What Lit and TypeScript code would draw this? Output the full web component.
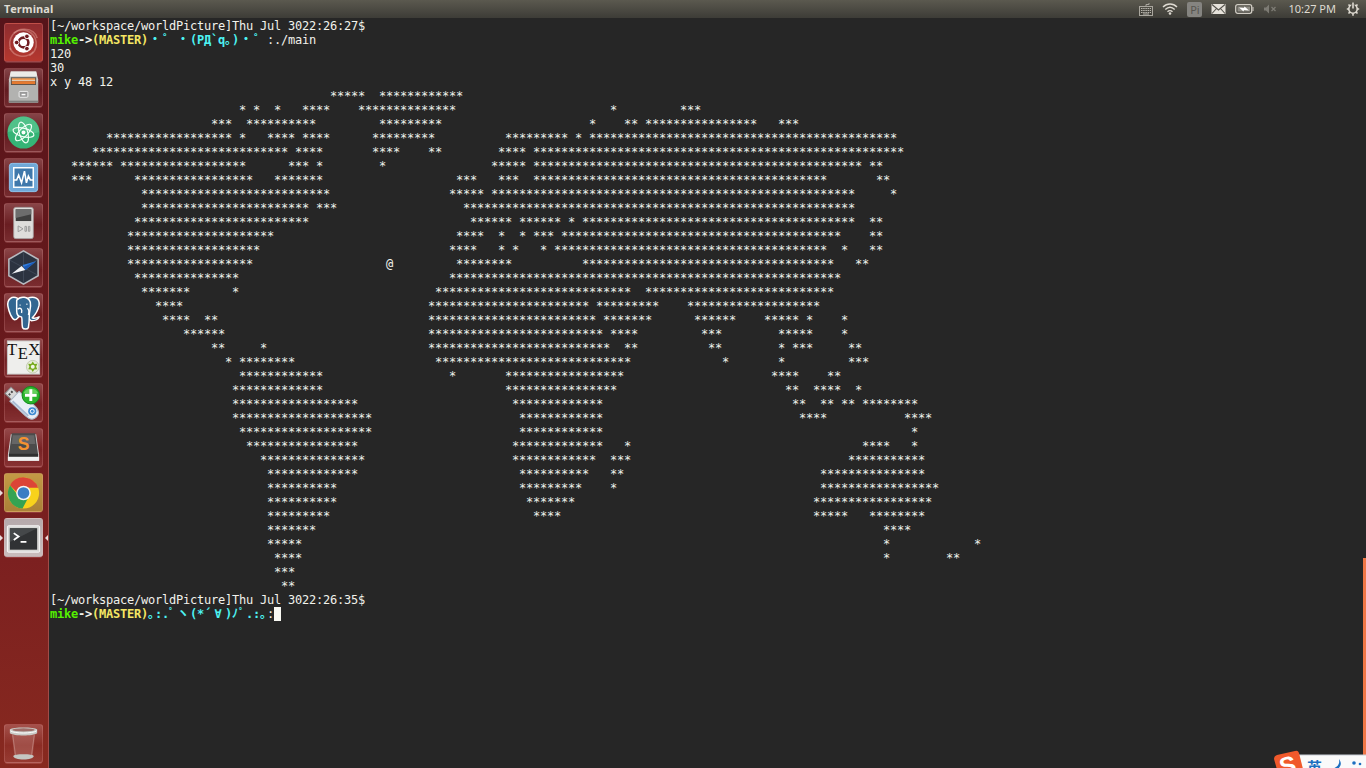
import { LitElement, html, svg, css, type TemplateResult } from "lit";
import { customElement, property } from "lit/decorators.js";

type Run = [col: number, len: number, ch?: string];

/* World map rows: runs of asterisks as [column, length]. */
const MAP: Run[][] = [
  [[40, 5], [47, 12]],
  [[27, 1], [29, 1], [32, 1], [36, 4], [44, 14], [80, 1], [90, 3]],
  [[23, 3], [28, 10], [47, 9], [77, 1], [82, 2], [85, 16], [104, 3]],
  [[8, 18], [27, 1], [31, 4], [36, 4], [46, 9], [65, 9], [75, 1], [77, 44]],
  [[6, 28], [35, 4], [46, 4], [54, 2], [64, 4], [69, 53]],
  [[3, 6], [10, 18], [34, 3], [38, 1], [47, 1], [63, 5], [69, 47], [117, 2]],
  [[3, 3], [12, 17], [32, 7], [58, 3], [64, 3], [69, 42], [118, 2]],
  [[13, 27], [57, 5], [63, 52], [120, 1]],
  [[13, 24], [38, 3], [59, 56]],
  [[12, 25], [60, 6], [67, 6], [74, 1], [76, 39], [117, 2]],
  [[11, 21], [58, 4], [64, 1], [67, 1], [69, 3], [73, 40], [117, 2]],
  [[11, 19], [57, 4], [64, 1], [66, 1], [70, 1], [72, 39], [113, 1], [117, 2]],
  [[11, 18], [48, 1, "@"], [58, 8], [76, 36], [115, 2]],
  [[12, 15], [57, 56]],
  [[13, 7], [26, 1], [55, 28], [85, 27]],
  [[15, 4], [54, 23], [78, 9], [91, 19]],
  [[16, 4], [22, 2], [54, 24], [79, 7], [92, 6], [102, 5], [108, 1], [113, 1]],
  [[19, 6], [54, 25], [80, 4], [93, 3], [104, 5], [113, 1]],
  [[23, 2], [30, 1], [54, 26], [82, 2], [94, 2], [104, 1], [106, 3], [114, 2]],
  [[25, 1], [27, 8], [55, 28], [96, 1], [104, 1], [114, 3]],
  [[27, 12], [57, 1], [65, 17], [103, 4], [111, 2]],
  [[26, 13], [65, 16], [105, 2], [109, 4], [115, 1]],
  [[26, 18], [66, 13], [106, 2], [110, 2], [113, 2], [116, 8]],
  [[26, 20], [67, 12], [107, 4], [122, 4]],
  [[27, 19], [67, 12], [123, 1]],
  [[28, 16], [66, 13], [82, 1], [116, 4], [123, 1]],
  [[30, 15], [66, 12], [80, 3], [114, 11]],
  [[31, 13], [67, 10], [80, 2], [110, 15]],
  [[31, 10], [67, 9], [80, 1], [110, 17]],
  [[31, 10], [68, 7], [109, 17]],
  [[31, 9], [69, 4], [109, 5], [117, 8]],
  [[31, 7], [119, 4]],
  [[31, 5], [119, 1], [132, 1]],
  [[32, 4], [119, 1], [128, 2]],
  [[32, 3]],
  [[33, 2]],
];

const toLine = (runs: Run[]) =>
  runs.reduce((line, [col, len, ch = "*"]) => line.padEnd(col) + ch.repeat(len), "");

const WIDE = new Set(["・", "゜", "ヽ", "∀"]);

@customElement("term-screen")
export class TermScreen extends LitElement {
  static styles = css`
    :host {
      display: block;
      background: #262626;
      color: #f2f2ec;
      font: 12px/14px "DejaVu Sans Mono", "Noto Sans CJK JP", monospace;
      padding: 1px 0 0 1px;
      overflow: hidden;
    }
    .line { display: flex; height: 14px; white-space: pre; }
    .run { display: flex; }
    .cell { flex: none; width: 7px; }
    .wide { width: 14px; text-align: center; }
    .bold { font-weight: bold; }
    .user { color: #55f000; }
    .branch { color: #f5e663; }
    .face { color: #4df3f3; }
    .cursor { width: 7px; height: 14px; background: #f8f8f2; }
  `;

  private cells(text: string, cls = "") {
    return html`<span class="run ${cls}">${[...text].map(
      (c) => html`<span class="cell ${WIDE.has(c) ? "wide" : ""}">${c}</span>`
    )}</span>`;
  }

  private line(content: unknown) {
    return html`<div class="line">${content}</div>`;
  }

  private prompt(face: string, rest: string) {
    return html`${this.cells("mike", "bold user")}${this.cells("->", "bold")}${this.cells(
      "(MASTER)",
      "bold branch"
    )}${this.cells(face, "bold face")}${this.cells(rest)}`;
  }

  render() {
    return html`
      ${this.line(this.cells("[~/workspace/worldPicture]Thu Jul 3022:26:27$"))}
      ${this.line(this.prompt("・゜・(РД`q｡)・゜", ":./main"))}
      ${["120", "30", "x y 48 12"].map((t) => this.line(this.cells(t)))}
      ${MAP.map((r) => this.line(this.cells(toLine(r))))}
      ${this.line(this.cells("[~/workspace/worldPicture]Thu Jul 3022:26:35$"))}
      ${this.line(html`${this.prompt("｡:.ﾟヽ(*´∀)ﾉﾟ.:｡", ":")}<span class="cursor"></span>`)}
    `;
  }
}

interface App {
  name: string;
  tone?: string;
  running?: boolean;
  active?: boolean;
  art: TemplateResult;
}

const APPS: App[] = [
  {
    name: "Dash home",
    tone: "dash",
    art: svg`
      <g fill="none" stroke="#e8a8a0" stroke-opacity=".45" stroke-width="1.6">
        <path d="M7 27C3 15 11 5 22 6c6 0 11 4 12 9"/><path d="M10 10c9-7 21-2 23 9 1 7-3 12-7 14"/>
        <path d="M30 29c-8 8-20 5-24-4"/>
      </g>
      <circle cx="20" cy="19.500" r="10.500" fill="#fff"/>
      <circle cx="20" cy="19.500" r="5" fill="none" stroke="#701c20" stroke-width="2.6"/>
      <g fill="#701c20" stroke="#fff" stroke-width="1"><circle cx="13" cy="19.500" r="2.400"/><circle cx="23.500" cy="13.200" r="2.400"/><circle cx="23.500" cy="25.800" r="2.400"/></g>`,
  },
  {
    name: "Files",
    art: svg`
      <path d="M7 3h26l2 8v24H5V11z" fill="#c9c9c7"/><path d="M7 3h26l1 5H6z" fill="#ecece9"/>
      <path d="M7 9h26v8H7z" fill="#55504c"/><path d="M8 10h24v2H8z" fill="#f5a15c"/><path d="M8 12h24v1H8z" fill="#fbe4cc"/><path d="M8 13h24v3H8z" fill="#e57a30"/>
      <path d="M5 14h2v3h26v-3h2v21H5z" fill="#b2b2b0"/><path d="M5 33h30v2H5z" fill="#80807e"/>
      <rect x="15.500" y="23.500" width="9" height="6" rx="1" fill="#999" stroke="#f0f0f0"/><path d="M18 26h4v1.500h-4z" fill="#fff"/>`,
  },
  {
    name: "Atom",
    art: svg`
      <circle cx="20" cy="19.500" r="16.500" fill="#35b476"/><path d="M4 19a16 16 0 0 1 32 0c-9 4-22-3-32 0z" fill="#66cc99" opacity=".55"/>
      <g fill="none" stroke="#f1fff7" stroke-width="1.2"><ellipse cx="20" cy="19.500" rx="11" ry="4.300" transform="rotate(14 20 19.500)"/><ellipse cx="20" cy="19.500" rx="11" ry="4.300" transform="rotate(74 20 19.500)"/><ellipse cx="20" cy="19.500" rx="11" ry="4.300" transform="rotate(134 20 19.500)"/></g>
      <circle cx="20" cy="19.500" r="2" fill="#fff"/>`,
  },
  {
    name: "System Monitor",
    art: svg`
      <rect x="5.500" y="5" width="29" height="29" rx="3" fill="#70a8d8" stroke="#8fc4ec"/>
      <rect x="10" y="9.500" width="20" height="20" fill="#3f78ab" stroke="#fff" stroke-width="1.5"/>
      <path d="M10 22h3l2-5 3 8 3-12 2 12 2-7 2 4h3" fill="none" stroke="#fff" stroke-width="1.6"/>`,
  },
  {
    name: "Media Player",
    art: svg`
      <rect x="10" y="4" width="20" height="32" rx="2" fill="#dedddb" stroke="#aaa" stroke-width=".8"/>
      <rect x="12" y="6" width="16" height="12" fill="#3f3f3f"/><path d="M12 6h16v5l-16 4z" fill="#6d6d6d"/>
      <path d="M14.500 23v6l5-3z" fill="none" stroke="#999"/><path d="M21.500 23.500h1.500v5h-1.500zM25 23.500h1.500v5H25z" fill="none" stroke="#999"/>`,
  },
  {
    name: "Compass",
    art: svg`
      <path d="M20 2.500 35 11v17L20 36.500 5 28V11z" fill="#2c3340" stroke="#b7bac0" stroke-width="1.6"/>
      <path d="M20 4v31M6 12l28 15M34 12 6 27" stroke="#434c5b" stroke-width=".8"/>
      <path d="m8 26 10-8 4 4z" fill="#f0f2f5"/><path d="m33 13-14 4 3 5z" fill="#2f7bdb"/>
      <path d="M20 19l2 3 11-9z" fill="#1b59b5"/>`,
  },
  {
    name: "pgAdmin",
    art: svg`
      <g stroke="#fff" stroke-width="1.5" stroke-linejoin="round" fill="#336791">
        <path d="M14 5C8 2 3 6 4 13c1 6 4 13 7 14 2 0 3-2 4-3z"/>
        <path d="M24 5c7-3 13 0 12 7-1 5-4 10-7 13 2 1 5 0 7-1-1 3-4 4-8 4l-4-3z"/>
        <path d="M13 7c4-5 12-4 14 2 1 5-1 9-1 13 0 6-.5 10-1 13-1 2-5 2-6 0-1-4 0-8-1-11-4 0-5-3-5-6z"/>
      </g>
      <path d="M14 16c3-2 5 0 4 4M24 15c2 2 2 4 1 7M16 12h1M23 11h1" fill="none" stroke="#fff" stroke-width="1.4"/>`,
  },
  {
    name: "TeX editor",
    art: svg`
      <rect x="3.500" y="2.500" width="33" height="34" fill="#eeeeec" stroke="#c8c8c6"/>
      <text class="tex" x="3" y="17">T</text><text class="tex" x="14" y="21">E</text><text class="tex" x="25" y="17">X</text>
      <circle cx="29.500" cy="29" r="6.500" fill="#e6ecd9" stroke="#b8c2a2" stroke-width=".8"/>
      <path d="m29.500 23.500 1.700 2.600 3-.1-1.300 3 1.300 2.600-3.100.1-1.600 2.600-1.600-2.600-3.100-.1 1.300-2.600-1.300-3 3 .1z" fill="#76aa1c"/><circle cx="29.500" cy="29" r="2" fill="#f0f5e5"/>`,
  },
  {
    name: "Startup Disk Creator",
    art: svg`
      <g transform="rotate(43 18 20)"><rect x="-1" y="15.500" width="10" height="9" fill="#d8d8d8" stroke="#888"/><path d="M2 17.500h2v2H2zM2 21h2v2H2z" fill="#444"/>
      <path d="M8 13h22c7 0 9 3 9 7s-2 7-9 7H8z" fill="#e9eef5" stroke="#aab4c2"/><path d="M10 24h22v2H10z" fill="#a8bbd4"/></g>
      <circle cx="29" cy="28.500" r="4.200" fill="#3d8ad0"/><circle cx="29" cy="28.500" r="2" fill="none" stroke="#fff"/>
      <circle cx="27.500" cy="12" r="9" fill="#2bb52c" stroke="#12881e"/><path d="M20 10a8 7 0 0 1 15 0z" fill="#7ddd70" opacity=".7"/>
      <path d="M27.500 6v12M21.500 12h12" stroke="#fff" stroke-width="3"/>`,
  },
  {
    name: "Sublime Text",
    art: svg`
      <path d="M4 27 7 6h26l3 21v6H4z" fill="#d4d4d4"/><path d="m8 5-3 22h30L32 5z" fill="#4b4b4b"/><path d="M9 7h22l1 9H8z" fill="#666"/>
      <path d="M4 29h32v4H4z" fill="#f2f2f2"/><path d="M5 26h30v3H5z" fill="#303030"/>
      <text class="sublime" x="14" y="22">S</text>`,
  },
  {
    name: "Chrome",
    tone: "gold",
    running: true,
    art: svg`
      <circle cx="20" cy="20" r="16" fill="#f8d21c"/>
      <path d="M6.100 12A16 16 0 0 1 35 14.500H20c-4 0-6 3-6.500 5z" fill="#dc4437"/>
      <path d="M6.100 12A16 16 0 0 0 19 36l6.500-12.500c-4 4-9 3-11-1z" fill="#35a352"/>
      <circle cx="20" cy="20" r="7.500" fill="#f5f5f5"/><circle cx="20" cy="20" r="6" fill="#3b7dc4"/>`,
  },
  {
    name: "Terminal",
    tone: "light",
    running: true,
    active: true,
    art: svg`
      <rect x="3.500" y="7.500" width="33" height="27" rx="1" fill="#d8d8d6" stroke="#f8f8f8"/>
      <rect x="6" y="10" width="28" height="22" fill="#303234"/><path d="M6 10h28L6 24z" fill="#45484a"/>
      <path d="m10 15 5 3.500-5 3.500M17 24h6" fill="none" stroke="#fff" stroke-width="1.8"/>`,
  },
];

const TRASH: App = {
  name: "Trash",
  art: svg`
    <path d="M8 10h24l-3 25H11z" fill="#c68a84" opacity=".35"/><path d="M9 11l3 22M31 11l-3 22" stroke="#e9c9c5" stroke-opacity=".35"/>
    <path d="M9.500 32.500c0-1.500 5-2 10.500-2s10.500.5 10.500 2-5 3.500-10.500 3.500-10.500-2-10.500-3.500z" fill="#c4c6c2"/>
    <path d="M6 5c3-2.500 25-2.500 28 0v4c-4 3-24 3-28 0z" fill="#c9cac6"/>
    <ellipse cx="20" cy="5.500" rx="11.500" ry="1.700" fill="#9d6d68"/><path d="M6.500 6.500c4 3 23 3 27 0" fill="none" stroke="#fff"/>`,
};

@customElement("app-launcher")
export class AppLauncher extends LitElement {
  static styles = css`
    :host {
      display: flex;
      flex-direction: column;
      gap: 6px;
      padding: 5px 5px 5px 4px;
      background: linear-gradient(#56141a, #67191c 40%, #7c2020 72%, #87291f);
      border-right: 1px solid #a04c48;
    }
    .tile {
      position: relative;
      flex: none;
      width: 39px;
      height: 39px;
      padding: 0;
      border: 1px solid rgba(255, 190, 190, 0.18);
      border-radius: 3px;
      background: linear-gradient(rgba(255, 200, 200, 0.26), rgba(255, 150, 150, 0.05) 55%, rgba(255, 170, 170, 0.14));
      box-shadow: 0 2px 0 -1px rgba(255, 170, 170, 0.2);
    }
    .dash { background: linear-gradient(#8e2c2f, #b5382f); }
    .gold { background: linear-gradient(#c39a45, #ab8138); }
    .light { background: linear-gradient(#b5a9ab, #c9bdbd); }
    .art { display: block; width: 39px; height: 39px; margin: -1px; }
    .trash { margin-top: auto; }
    .running::before,
    .active::after {
      content: "";
      position: absolute;
      top: 16px;
      border: 3px solid transparent;
    }
    .running::before { left: -5px; border-left-color: #e8dcdc; border-right-width: 0; }
    .active::after { right: -6px; border-right-color: #e8dcdc; border-left-width: 0; }
    .tex { font: 17px "Liberation Serif", serif; fill: #111; }
    .sublime { font: bold 18px "Liberation Sans", sans-serif; fill: #f59230; }
  `;

  private tile(app: App, extra = "") {
    return html`<button
      class="tile ${app.tone ?? ""} ${app.running ? "running" : ""} ${app.active ? "active" : ""} ${extra}"
      aria-label=${app.name}
    >
      <svg class="art" viewBox="0 0 40 39" aria-hidden="true">${app.art}</svg>
    </button>`;
  }

  render() {
    return html`${APPS.map((a) => this.tile(a))}${this.tile(TRASH, "trash")}`;
  }
}

@customElement("top-panel")
export class TopPanel extends LitElement {
  @property() heading = "Terminal";

  static styles = css`
    :host {
      display: flex;
      align-items: center;
      justify-content: space-between;
      height: 18px;
      padding: 0 6px 0 4px;
      background: linear-gradient(#5b594f, #3d3c37);
      color: #dfdbd2;
      font: 11px/18px "Noto Sans", sans-serif;
    }
    .title { font: bold 11px/18px "Open Sans", sans-serif; }
    .tray { display: flex; align-items: center; gap: 9px; }
    .item {
      display: flex;
      align-items: center;
      padding: 0;
      border: 0;
      background: none;
      color: inherit;
      font: inherit;
    }
    .pi {
      justify-content: center;
      width: 15px;
      height: 15px;
      border-radius: 2px;
      background: #858480;
      color: #56554f;
      line-height: 15px;
    }
    .clock { margin: 0 1px 0 2px; }
    .glyph { display: block; height: 16px; }
  `;

  private icon(label: string, width: number, art: TemplateResult) {
    return html`<button class="item" aria-label=${label}>
      <svg class="glyph" width=${width} height="16" viewBox="0 0 ${width} 16" aria-hidden="true">${art}</svg>
    </button>`;
  }

  render() {
    return html`
      <span class="title">${this.heading}</span>
      <div class="tray">
        ${this.icon("Keyboard", 14, svg`<rect x=".5" y="5.500" width="13" height="9" fill="none" stroke="#a9a69e"/><path d="M2 7.500h10M2 9.500h10M2 11.500h10" stroke="#b8b5ad" stroke-dasharray="1.500 .7"/><path d="M4 13h6" stroke="#b8b5ad"/><path d="M7 5V3.500h3V2" fill="none" stroke="#a9a69e"/>`)}
        ${this.icon("Network", 16, svg`<g fill="none" stroke="#dfdbd2" stroke-width="1.400"><path d="M1 6c4-4 10-4 14 0"/><path d="M3.300 8.500c3-3 6.400-3 9.400 0"/><path d="M5.500 10.800c1.500-1.500 3.500-1.500 5 0"/></g><circle cx="8" cy="12.500" r="1.300" fill="#dfdbd2"/>`)}
        <button class="item pi" aria-label="Input method Pi">Pi</button>
        ${this.icon("Messages", 15, svg`<rect x=".5" y="3" width="14" height="10" fill="#e6e2da"/><path d="m1 3.500 6.500 5.500L14 3.500M1 12.500l4.500-5M14 12.500l-4.500-5" fill="none" stroke="#55534c" stroke-width="1.100"/>`)}
        ${this.icon("Battery", 19, svg`<rect x=".7" y="3.700" width="16" height="8.600" rx="2" fill="none" stroke="#d0ccc3" stroke-width="1.300"/><path d="M2.500 5.500h12.500v5H2.500z" fill="#8f8d85"/><path d="M17.500 6h1v4h-1z" fill="#d0ccc3"/><path d="m4 6.500 5 .5.500-1.500 4.500 4-5-.5-.5 1.500z" fill="#fff"/>`)}
        ${this.icon("Sound muted", 14, svg`<path d="M1 6.500h2l3-3v9l-3-3H1z" fill="#7d7b74"/><path d="m8.500 6 4 4m0-4-4 4" stroke="#7d7b74" stroke-width="1.300"/>`)}
        <button class="item clock">10:27 PM</button>
        ${this.icon("Session", 14, svg`<circle cx="7" cy="8" r="4.200" fill="none" stroke="#dfdbd2" stroke-width="1.600"/><g stroke="#dfdbd2" stroke-width="1.600"><path d="M7 12.500v2.200M.8 8H3M11 8h2.200M2.500 3.500l1.600 1.600M11.500 3.500 9.900 5.100M2.500 12.500l1.600-1.600M11.500 12.500l-1.600-1.600"/></g><path d="M5.300 1.500h3.400v6H5.300z" fill="#504e46"/><path d="M7 1.500v6" stroke="#dfdbd2" stroke-width="1.600"/>`)}
      </div>
    `;
  }
}

@customElement("app-root")
export class AppRoot extends LitElement {
  static styles = css`
    :host {
      position: relative;
      display: grid;
      grid-template: auto 1fr / auto 1fr;
      height: 100vh;
      overflow: hidden;
    }
    .panel { grid-column: 1 / -1; }
    .scroll {
      position: absolute;
      right: 0;
      bottom: 0;
      width: 3px;
      height: 210px;
      background: #f07746;
    }
    .ime {
      position: absolute;
      right: 0;
      bottom: 0;
      display: flex;
      width: 92px;
      height: 16px;
    }
    .bar { display: block; overflow: visible; }
    .ime-text { font: bold 15px "Noto Sans CJK SC", sans-serif; fill: #1c6fc0; }
    .ime-logo { font: bold 25px "Liberation Sans", sans-serif; fill: #fff; }
  `;

  render() {
    return html`
      <top-panel class="panel"></top-panel>
      <app-launcher></app-launcher>
      <term-screen></term-screen>
      <div class="scroll"></div>
      <div class="ime">
        <svg class="bar" width="92" height="16" viewBox="0 0 92 16" role="img" aria-label="Input method toolbar">
          <path d="M20 3h72v13H20z" fill="#fafafa"/><path d="M20 3h72" stroke="#c9ced6"/>
          <path d="M3 3q-3 1-3 4l4 14h26L25 1q-1-3-4-2z" fill="#f0592b"/>
          <text class="ime-logo" x="5" y="22" transform="rotate(-12 14 12)">S</text>
          <text class="ime-text" x="33" y="21">英</text>
          <path d="M65 7c3 4 2 7-1 10h-6c6-2 8-5 7-10z" fill="#1c6fc0"/>
          <circle cx="80" cy="11" r="1.800" fill="#1c6fc0"/><circle cx="86" cy="12" r="1.300" fill="#1c6fc0"/>
        </svg>
      </div>
    `;
  }
}
